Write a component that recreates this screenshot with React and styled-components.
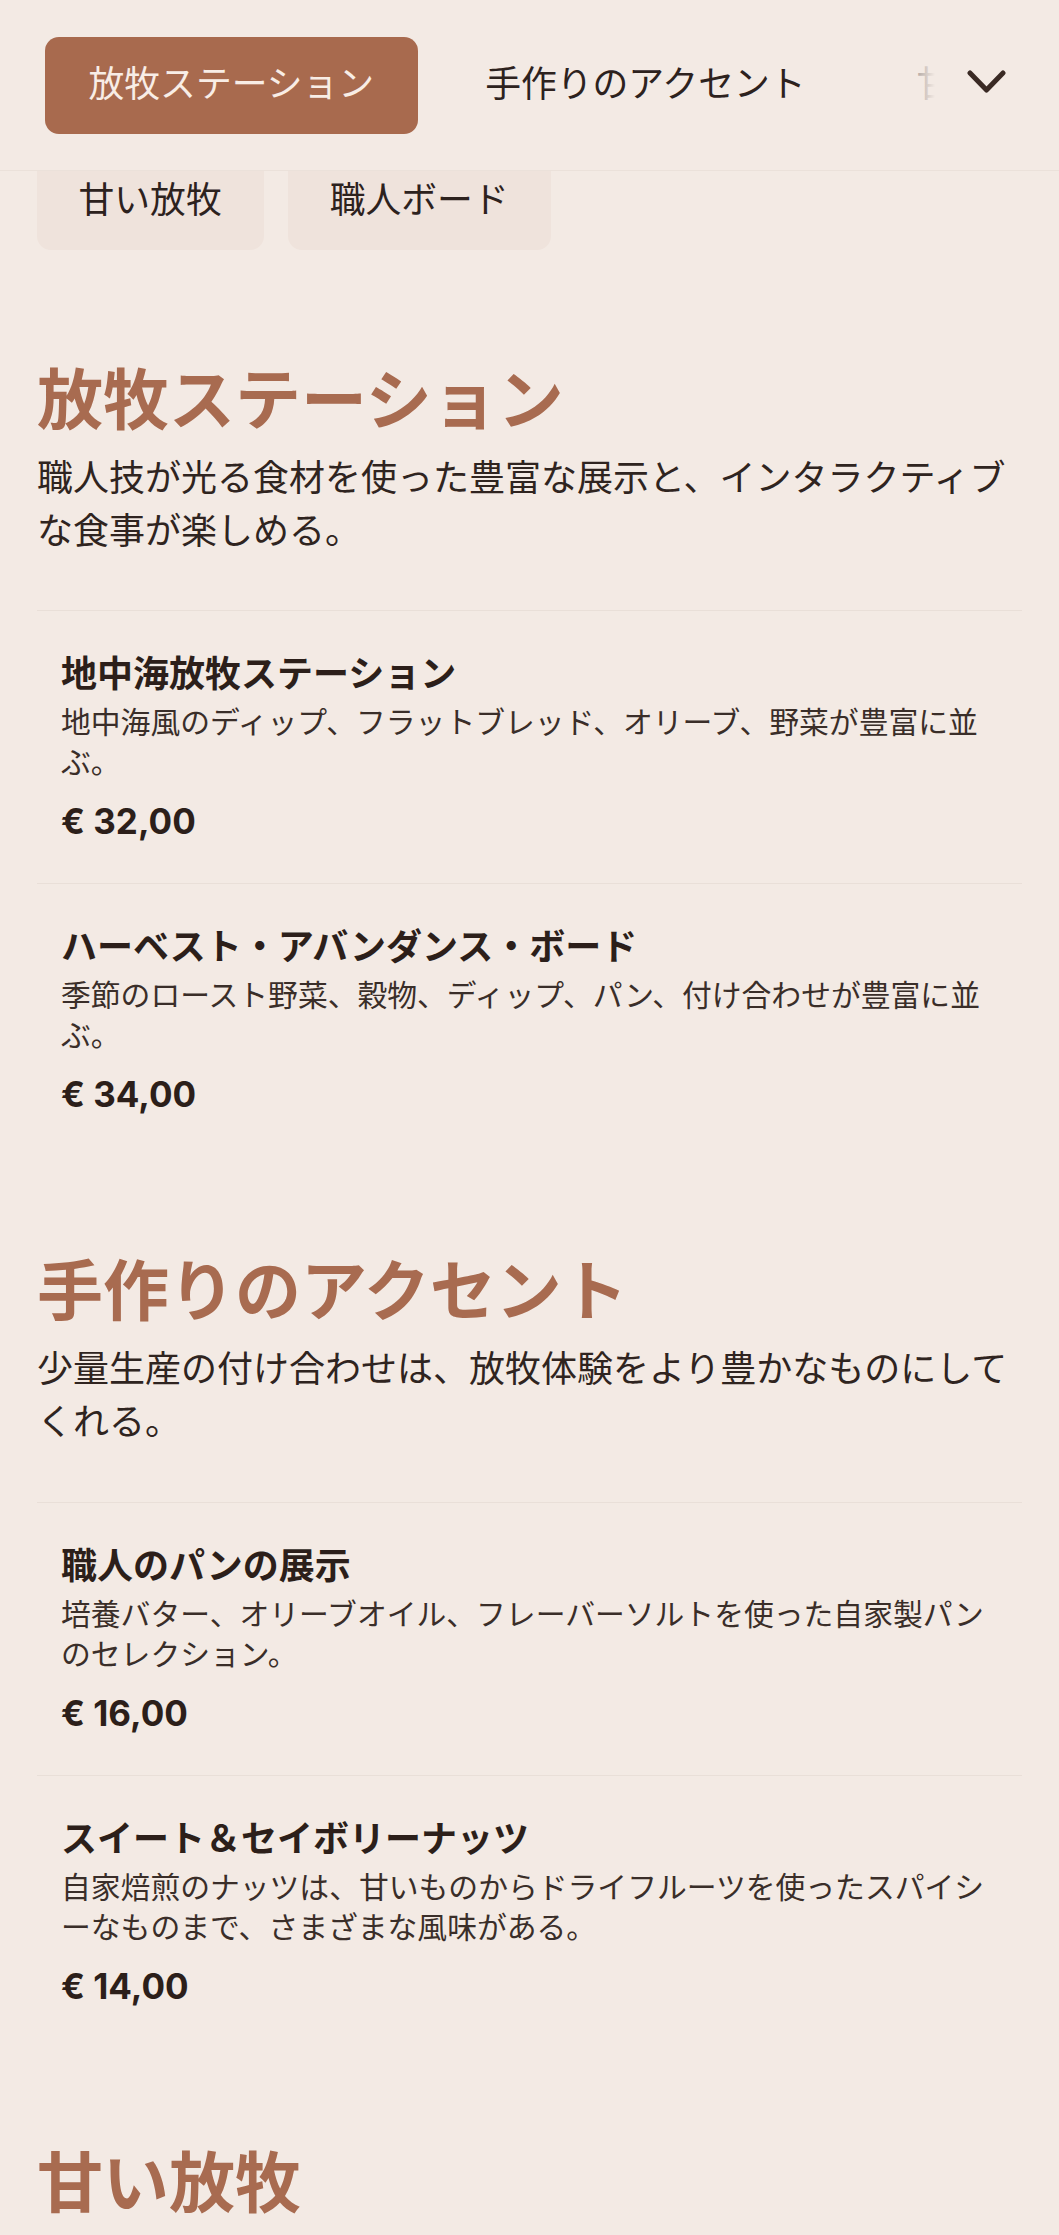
import styled, { createGlobalStyle } from "styled-components";

const GlobalStyle = createGlobalStyle`
  body {
    margin: 0;
    background: #f3eae4;
    font-family: "Noto Sans CJK JP", "Noto Sans", sans-serif;
    color: #2d221e;
  }
`;

const Header = styled.header`
  position: sticky;
  top: 0;
  z-index: 2;
  height: 170px;
  background: #f3eae4;
  border-bottom: 1px solid #ebe1da;
  overflow: hidden;
`;

const TabTrack = styled.nav`
  display: flex;
  align-items: center;
  gap: 24px;
  height: 100%;
  padding-left: 45px;
  white-space: nowrap;
`;

const Tab = styled.button`
  display: flex;
  align-items: center;
  flex-shrink: 0;
  height: 97px;
  padding: 0 43.5px 9px;
  border: none;
  border-radius: 14px;
  font-family: inherit;
  font-size: 35.8px;
  font-weight: 400;
  background: ${(p) => (p.$active ? "#a86a4e" : "transparent")};
  color: ${(p) => (p.$active ? "#f8ede6" : "#2d221e")};
`;

const Fade = styled.div`
  position: absolute;
  top: 0;
  right: 0;
  bottom: 0;
  width: 180px;
  display: flex;
  align-items: center;
  justify-content: flex-end;
  padding: 0 53px 6px 0;
  box-sizing: border-box;
  background: linear-gradient(to right, rgba(243, 234, 228, 0) 0, #f3eae4 56px);
`;

const GhostRow = styled.div`
  display: flex;
  gap: 24px;
  padding-left: 36.5px;
  margin-top: -19px;
`;

const GhostTab = styled.div`
  display: flex;
  align-items: center;
  height: 98px;
  padding: 0 42px 8px;
  box-sizing: border-box;
  border-radius: 14px;
  background: #efe3dc;
  font-size: 35.8px;
  color: #2d221e;
`;

const Main = styled.main`
  padding: 14.5px 37px 0;
`;

const Section = styled.section`
  padding-top: 90px;
`;

const Heading = styled.h2`
  margin: 0;
  font-size: 66px;
  line-height: 80px;
  font-weight: 700;
  color: #a86b50;
`;

const SectionDesc = styled.p`
  margin: 14px 0 55.5px;
  font-size: 36px;
  line-height: 53px;
  color: #2f2420;
`;

const Item = styled.article`
  border-top: 1px solid #e9dfd8;
  padding: 36px 24px 40px;
`;

const ItemTitle = styled.h3`
  margin: 0;
  font-size: 36px;
  line-height: 48px;
  font-weight: 700;
  color: #2c1f1a;
`;

const ItemDesc = styled.p`
  margin: 5px 0 0;
  font-size: 29.8px;
  line-height: 40px;
  color: #3a2e29;
`;

const Price = styled.div`
  margin-top: 19px;
  font-family: "Inter", "Noto Sans", sans-serif;
  font-size: 35px;
  line-height: 44px;
  font-weight: 700;
  color: #2c1f1a;
`;

const Chevron = () => (
  <svg width="39" height="24" viewBox="0 0 39 24" fill="none">
    <path
      d="M3 3 L19.5 20 L36 3"
      stroke="#3a2a24"
      strokeWidth="5"
      strokeLinecap="round"
      strokeLinejoin="round"
    />
  </svg>
);

const tabs = ["放牧ステーション", "手作りのアクセント", "甘い放牧", "職人ボード"];

const sections = [
  {
    title: "放牧ステーション",
    desc: "職人技が光る食材を使った豊富な展示と、インタラクティブな食事が楽しめる。",
    items: [
      {
        name: "地中海放牧ステーション",
        desc: "地中海風のディップ、フラットブレッド、オリーブ、野菜が豊富に並ぶ。",
        price: "€ 32,00",
      },
      {
        name: "ハーベスト・アバンダンス・ボード",
        desc: "季節のロースト野菜、穀物、ディップ、パン、付け合わせが豊富に並ぶ。",
        price: "€ 34,00",
      },
    ],
  },
  {
    title: "手作りのアクセント",
    desc: "少量生産の付け合わせは、放牧体験をより豊かなものにしてくれる。",
    items: [
      {
        name: "職人のパンの展示",
        desc: "培養バター、オリーブオイル、フレーバーソルトを使った自家製パンのセレクション。",
        price: "€ 16,00",
      },
      {
        name: "スイート＆セイボリーナッツ",
        desc: "自家焙煎のナッツは、甘いものからドライフルーツを使ったスパイシーなものまで、さまざまな風味がある。",
        price: "€ 14,00",
      },
    ],
  },
  { title: "甘い放牧", items: [] },
];

export default function App() {
  return (
    <>
      <GlobalStyle />
      <Header>
        <TabTrack>
          {tabs.map((t, i) => (
            <Tab key={t} $active={i === 0}>
              {t}
            </Tab>
          ))}
        </TabTrack>
        <Fade>
          <Chevron />
        </Fade>
      </Header>
      <GhostRow>
        <GhostTab>甘い放牧</GhostTab>
        <GhostTab>職人ボード</GhostTab>
      </GhostRow>
      <Main>
        {sections.map((s) => (
          <Section key={s.title}>
            <Heading>{s.title}</Heading>
            {s.desc && <SectionDesc>{s.desc}</SectionDesc>}
            {s.items.map((it) => (
              <Item key={it.name}>
                <ItemTitle>{it.name}</ItemTitle>
                <ItemDesc>{it.desc}</ItemDesc>
                <Price>{it.price}</Price>
              </Item>
            ))}
          </Section>
        ))}
      </Main>
    </>
  );
}
